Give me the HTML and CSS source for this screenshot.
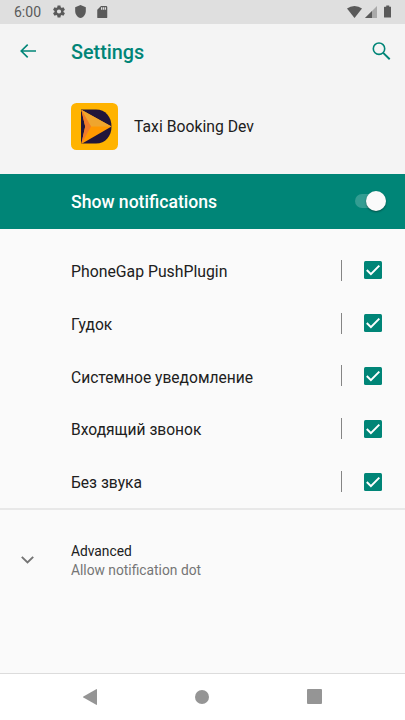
FILE: index.html
```html
<!DOCTYPE html>
<html lang="en">
<head>
<meta charset="utf-8">
<title>Settings</title>
<link rel="stylesheet" href="styles.css">
</head>
<body>
<div class="status">
  <span class="clock">6:00</span>
  <svg class="gear" viewBox="2 2 20 20"><path d="M19.43 12.98c.04-.32.07-.64.07-.98s-.03-.66-.07-.98l2.11-1.65c.19-.15.24-.42.12-.64l-2-3.46c-.12-.22-.39-.3-.61-.22l-2.49 1c-.52-.4-1.08-.73-1.69-.98l-.38-2.65C14.46 2.18 14.25 2 14 2h-4c-.25 0-.46.18-.49.42l-.38 2.65c-.61.25-1.17.59-1.69.98l-2.49-1c-.23-.09-.49 0-.61.22l-2 3.46c-.13.22-.07.49.12.64l2.11 1.65c-.04.32-.07.65-.07.98s.03.66.07.98l-2.11 1.65c-.19.15-.24.42-.12.64l2 3.46c.12.22.39.3.61.22l2.49-1c.52.4 1.08.73 1.69.98l.38 2.65c.03.24.24.42.49.42h4c.25 0 .46-.18.49-.42l.38-2.65c.61-.25 1.17-.59 1.69-.98l2.49 1c.23.09.49 0 .61-.22l2-3.46c.12-.22.07-.49-.12-.64zM12 15.500a3.500 3.500 0 1 1 0-7 3.500 3.500 0 0 1 0 7z"/></svg>
  <svg class="shield" viewBox="3 1 18 22"><path d="M12 1 3 5v6c0 5.550 3.840 10.740 9 12 5.160-1.260 9-6.450 9-12V5z"/></svg>
  <svg class="card" viewBox="4 2 16 20"><path d="M18 2h-8L4 8v12c0 1.100.9 2 2 2h12c1.100 0 2-.9 2-2V4c0-1.100-.9-2-2-2zm-6 6h-2V4h2zm3 0h-2V4h2zm3 0h-2V4h2z"/></svg>
  <svg class="wifi" viewBox="0 0 15 12"><path d="M7.500 12 0 2.600Q3.200 0 7.500 0T15 2.600z"/></svg>
  <svg class="signal" viewBox="0 0 12 12"><path d="M0 12 12 0v12z" opacity=".4"/><path d="M0 12 7 5v7z"/></svg>
  <svg class="battery" viewBox="0 0 8 13"><path d="M2.400 0h3.200v1.300H7.300q.7 0 .7.700v10.300q0 .7-.7.700H.7q-.7 0-.7-.7V2q0-.7.7-.7h1.700z"/></svg>
</div>
<header>
  <div class="bar">
    <svg class="back" viewBox="0 0 16 14"><path d="M16 7H1.200M7.700.6 1.200 7l6.500 6.400"/></svg>
    <h1>Settings</h1>
    <svg class="search" viewBox="0 0 19 18"><circle cx="7" cy="6.700" r="5.700"/><path d="m11.200 10.900 6.500 6.300"/></svg>
  </div>
  <div class="app">
    <svg class="logo" viewBox="0 0 47 47">
      <rect width="47" height="47" rx="5.500" fill="#ffb300"/>
      <path d="M10 6.500h15c9.500 0 15.500 7.500 15.500 17s-6 17-15.500 17H10z" fill="#21153a"/>
      <path d="M10.300 6.800 40.500 23.500 10.300 41l3.900-17.500z" fill="#ff9800"/>
      <path d="M10.300 6.800 40.500 23.500H20z" fill="#efa52e"/>
      <path d="M10.300 6.800 20 23.500 10.300 41l3.900-17.500z" fill="#f07a2a"/>
    </svg>
    <span>Taxi Booking Dev</span>
  </div>
</header>
<div class="banner"><span>Show notifications</span><i class="switch"><b></b></i></div>
<main>
  <div class="row"><span>PhoneGap PushPlugin</span><i class="sep"></i><svg class="check" viewBox="0 0 18 18"><rect width="18" height="18" rx="1.500"/><path d="m2.800 9 4.100 4.100 8.400-8.500"/></svg></div>
  <div class="row cyr"><span>Гудок</span><i class="sep"></i><svg class="check" viewBox="0 0 18 18"><rect width="18" height="18" rx="1.500"/><path d="m2.800 9 4.100 4.100 8.400-8.500"/></svg></div>
  <div class="row cyr"><span>Системное уведомление</span><i class="sep"></i><svg class="check" viewBox="0 0 18 18"><rect width="18" height="18" rx="1.500"/><path d="m2.800 9 4.100 4.100 8.400-8.500"/></svg></div>
  <div class="row cyr"><span>Входящий звонок</span><i class="sep"></i><svg class="check" viewBox="0 0 18 18"><rect width="18" height="18" rx="1.500"/><path d="m2.800 9 4.100 4.100 8.400-8.500"/></svg></div>
  <div class="row cyr"><span>Без звука</span><i class="sep"></i><svg class="check" viewBox="0 0 18 18"><rect width="18" height="18" rx="1.500"/><path d="m2.800 9 4.100 4.100 8.400-8.500"/></svg></div>
</main>
<section class="advanced">
  <svg class="chevron" viewBox="0 0 13 8"><path d="m.8.8 5.700 5.700L12.200.8"/></svg>
  <div><p>Advanced</p><p class="sub">Allow notification dot</p></div>
</section>
<nav>
  <svg viewBox="0 0 14 16"><path d="M13.200.2q.8-.4.8.5v14.600q0 .9-.8.500L.4 8.500q-.7-.5 0-1z"/></svg>
  <svg viewBox="0 0 14 14"><circle cx="7" cy="7" r="7"/></svg>
  <svg viewBox="0 0 15 15"><rect width="15" height="15" rx="1"/></svg>
</nav>
</body>
</html>
```
FILE: styles.css
```css
* { box-sizing: border-box; }
body {
  margin: 0;
  width: 405px;
  height: 720px;
  overflow: hidden;
  display: flex;
  flex-direction: column;
  background: #fafafa;
  color: #202020;
  font-family: Roboto, sans-serif;
}
svg { display: block; flex: none; }
h1, p { margin: 0; }

.status {
  height: 23.500px;
  flex: none;
  display: flex;
  align-items: center;
  padding: 0 14px;
  background: #dfdfdf;
  fill: #5a5a5a;
}
.clock { width: 39px; padding-top: 1px; font-size: 14px; line-height: 24px; color: #5a5a5a; }
.gear { width: 12px; height: 13px; }
.shield { width: 11px; height: 13px; margin-left: 10px; }
.card { width: 10.500px; height: 12.500px; margin-left: 11px; }
.wifi { width: 15px; height: 12px; margin-left: auto; }
.signal { width: 12px; height: 12px; margin-left: 2.500px; }
.battery { width: 7.500px; height: 13px; margin-left: 7px; }

header { height: 150px; flex: none; background: #f4f4f4; }
.bar { display: flex; align-items: center; height: 55px; padding: 0 14.500px 0 20px; }
.back { width: 16px; height: 14px; }
.back path, .search { fill: none; stroke: #008577; stroke-width: 1.600; }
.bar h1 { margin-left: 35px; padding-top: 3px; font-size: 19.800px; font-weight: 500; line-height: 24px; color: #008577; }
.search { width: 19px; height: 18px; margin-left: auto; }
.search path { stroke-width: 2; }
.app { display: flex; align-items: center; height: 47px; margin: 24px 0 0 71px; font-size: 15.750px; }
.app span { padding-top: 1px; }
.logo { width: 47px; height: 47px; margin-right: 16px; }

.banner {
  height: 55px;
  flex: none;
  display: flex;
  align-items: center;
  justify-content: space-between;
  padding: 0 19px 0 71px;
  background: #008577;
  color: #fff;
  font-size: 17.600px;
  font-weight: 500;
}
.banner span { padding-top: 1px; }
.switch { display: flex; justify-content: flex-end; align-items: center; width: 31px; height: 14px; border-radius: 7px; background: #339d92; }
.switch b { width: 20px; height: 20px; border-radius: 50%; background: #fafafa; box-shadow: 0 1px 2px rgba(0, 0, 0, 0.4); }

main { flex: none; padding-top: 15.500px; border-bottom: 2px solid #e8e8e8; }
.row { display: flex; align-items: center; height: 52.800px; padding: 0 22.750px 0 71px; font-size: 15.800px; }
.row span { flex: 1; padding-top: 1.500px; }
.row.cyr { font-size: 15.600px; }
.row.cyr span { padding-top: 3.200px; }
.sep { width: 1px; height: 21px; margin-right: 22.750px; background: #858585; }
.check { width: 18px; height: 18px; fill: #008577; }
.check path { fill: none; stroke: #fff; stroke-width: 2; }

.advanced { flex: 1; display: flex; align-items: flex-start; padding: 32px 0 0 21px; font-size: 13.800px; line-height: 19px; }
.chevron { width: 13px; height: 8px; margin: 14.500px 37px 0 0; fill: none; stroke: #747474; stroke-width: 1.900; }
.sub { color: #757575; }

nav { height: 47px; flex: none; display: flex; align-items: center; justify-content: space-between; padding: 0 83.500px 1px 82.500px; border-top: 1px solid #dcdcdc; background: #fff; fill: #959595; }
nav svg:nth-child(1) { width: 14px; height: 16px; }
nav svg:nth-child(2) { width: 14px; height: 14px; }
nav svg:nth-child(3) { width: 15px; height: 15px; }
```
